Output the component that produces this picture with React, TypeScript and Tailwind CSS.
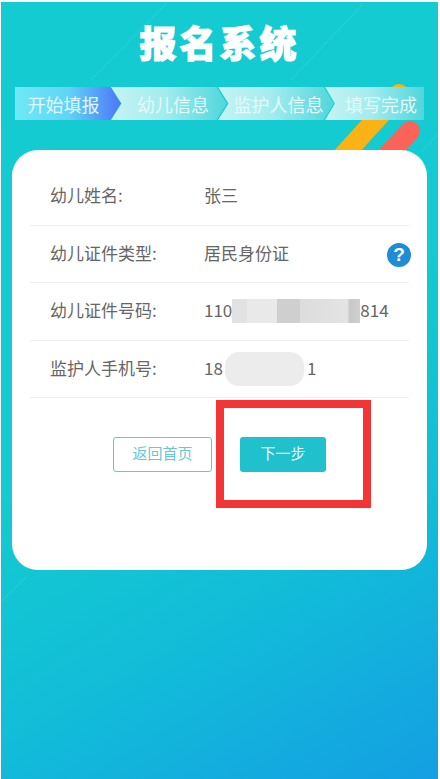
const rows = [
  { label: '幼儿姓名:', value: <span>张三</span> },
  { label: '幼儿证件类型:', value: <span>居民身份证</span>, help: true },
  {
    label: '幼儿证件号码:',
    value: (
      <>
        <span>110</span>
        <span className="w-[128px] h-[24px] mt-[2px] bg-[linear-gradient(90deg,#e2e2e2_0%,#e2e2e2_12%,#e9e9e9_12%,#e9e9e9_35%,#cfcfcf_35%,#cfcfcf_53%,#dcdcdc_53%,#e4e4e4_90%,#c8c8c8_92%,#d0d0d0_100%)]" />
        <span>814</span>
      </>
    ),
  },
  {
    label: '监护人手机号:',
    value: (
      <>
        <span>18</span>
        <span className="w-[79px] h-[34px] mt-[3px] ml-[2px] mr-[3px] rounded-[14px] bg-[#ececec]" />
        <span>1</span>
      </>
    ),
  },
];

const steps = [
  { text: '开始填报', cls: 'w-[106px] bg-[linear-gradient(90deg,#6fe9f5_0%,#62d4f6_50%,#4f7ff8_95%)] text-[#e0f9ff] [clip-path:polygon(0_0,90%_0,100%_50%,90%_100%,0_100%)] pr-[9px]' },
  { text: '幼儿信息', cls: 'w-[116px] bg-[linear-gradient(90deg,#c5f3f3_0%,#a5ecee_45%,#4fd6dc_100%)] text-[#e3fafa] -ml-[10px] [clip-path:polygon(0_0,91%_0,100%_50%,91%_100%,0_100%,9%_50%)] pl-[8px]' },
  { text: '监护人信息', cls: 'w-[116px] bg-[linear-gradient(90deg,#c5f3f3_0%,#a5ecee_45%,#4fd6dc_100%)] text-[#e3fafa] -ml-[9px] [clip-path:polygon(0_0,91%_0,100%_50%,91%_100%,0_100%,9%_50%)] pl-[5px]' },
  { text: '填写完成', cls: 'w-[99px] bg-[linear-gradient(90deg,#c5f3f3_0%,#a5ecee_45%,#4fd6dc_100%)] text-[#e3fafa] -ml-[9px] [clip-path:polygon(0_0,100%_0,100%_100%,0_100%,10%_50%)] pl-[13px]' },
];

export default function App() {
  return (
    <div className="w-[440px] h-[779px] bg-white pt-[2px] pl-px pr-[2px] overflow-hidden font-['Noto_Sans_CJK_SC',sans-serif]">
      <div className="relative h-full bg-[linear-gradient(150deg,#13cbd0_0%,#13cbd0_48%,#12bdd8_72%,#149fe3_100%)] overflow-hidden">
        <svg className="absolute inset-0" width="437" height="777" fill="none">
          <path d="M90 78 L165 2M290 78 L362 2M420 150 L437 132M0 600 L25 575" stroke="#ffffff" strokeOpacity="0.12" />
          <path d="M398 92 L320 178" stroke="#fbb214" strokeWidth="20" strokeLinecap="round" />
          <path d="M409 129 L371 170" stroke="#fb6358" strokeWidth="20" strokeLinecap="round" />
        </svg>

        <div className="relative flex flex-col px-[11px]">
          <h1 className="h-[85px] pt-[13px] text-center text-[37px] leading-[54px] font-black tracking-[3px] text-white [-webkit-text-stroke:1px_white]">
            报名系统
          </h1>

          <div className="flex h-[33px] ml-[3px]">
            {steps.map((step) => (
              <div
                key={step.text}
                className={`${step.cls} shrink-0 flex items-center justify-center text-[18px] leading-none whitespace-nowrap`}
              >
                {step.text}
              </div>
            ))}
          </div>

          <div className="mt-[30px] h-[420px] bg-white rounded-[26px] px-[18px] pt-[18px] text-[17px] text-[#666666]">
            {rows.map((row) => (
              <div key={row.label} className="relative h-[57.5px] flex items-center border-b border-[#eeeeee] pl-[20px] pb-[3px]">
                <span className="w-[154px] shrink-0">{row.label}</span>
                <div className="flex items-center">{row.value}</div>
                {row.help && (
                  <span className="absolute right-[-2px] top-[17px] w-[24px] h-[24px] rounded-full bg-[#1f8cd6] text-white text-[19px] font-bold leading-[24px] text-center font-['Liberation_Sans',sans-serif]">
                    ?
                  </span>
                )}
              </div>
            ))}

            <div className="relative flex justify-center gap-[28px] mt-[39px]">
              <button className="w-[99px] h-[35px] pb-[3px] rounded-[3px] border-[1.5px] border-solid border-[#5fcad4] bg-white text-[15px] text-[#66c8d2]">
                返回首页
              </button>
              <button className="w-[86px] h-[35px] pb-[3px] rounded-[3px] bg-[#1fc1cc] text-[15px] text-[#e9fbfb]">
                下一步
              </button>
              <div className="absolute left-[186px] top-[-37px] w-[155px] h-[108px] border-[8px] border-[#f43535]" />
            </div>
          </div>
        </div>
      </div>
    </div>
  );
}
